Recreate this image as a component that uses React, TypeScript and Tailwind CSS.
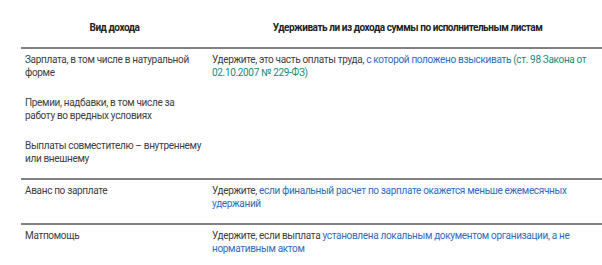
const rows = [
  {
    income: [
      "Зарплата, в том числе в натуральной форме",
      "Премии, надбавки, в том числе за работу во вредных условиях",
      "Выплаты совместителю – внутреннему или внешнему",
    ],
    answer: (
      <>
        Удержите, это часть оплаты труда,{" "}
        <a className="text-[#2f6bbd]">с которой положено взыскивать</a>{" "}
        <a className="text-[#21897a]">(ст. 98 Закона от 02.10.2007 № 229-ФЗ)</a>
      </>
    ),
  },
  {
    income: ["Аванс по зарплате"],
    answer: (
      <>
        Удержите,{" "}
        <a className="text-[#2f6bbd]">
          если финальный расчет по зарплате окажется меньше ежемесячных удержаний
        </a>
      </>
    ),
  },
  {
    income: ["Матпомощь"],
    answer: (
      <>
        Удержите, если выплата{" "}
        <a className="text-[#2f6bbd]">
          установлена локальным документом организации, а не нормативным актом
        </a>
      </>
    ),
  },
]

export default function App() {
  return (
    <div className="w-[602px] h-[265px] overflow-hidden bg-white pl-[21px] font-['Roboto',sans-serif] text-[10px] leading-[13px] tracking-[-0.33px] text-[#3d3d3d]">
      <div className="w-[586px]">
        <div className="grid grid-cols-[187px_399px] h-[49px] pt-[21px] border-b-2 border-[#808080] text-center font-bold tracking-[-0.45px] text-[#222]">
          <div>Вид дохода</div>
          <div>Удерживать ли из дохода суммы по исполнительным листам</div>
        </div>
        {rows.map((row, i) => (
          <div
            key={i}
            className={
              "grid grid-cols-[187px_399px] pt-[4px] pb-[13px]" +
              (i < rows.length - 1 ? " border-b-2 border-[#808080]" : "")
            }
          >
            <div className="flex flex-col gap-[17px] px-[4px]">
              {row.income.map((t, j) => (
                <p key={j}>{t}</p>
              ))}
            </div>
            <div className="px-[4px]">{row.answer}</div>
          </div>
        ))}
      </div>
    </div>
  )
}
